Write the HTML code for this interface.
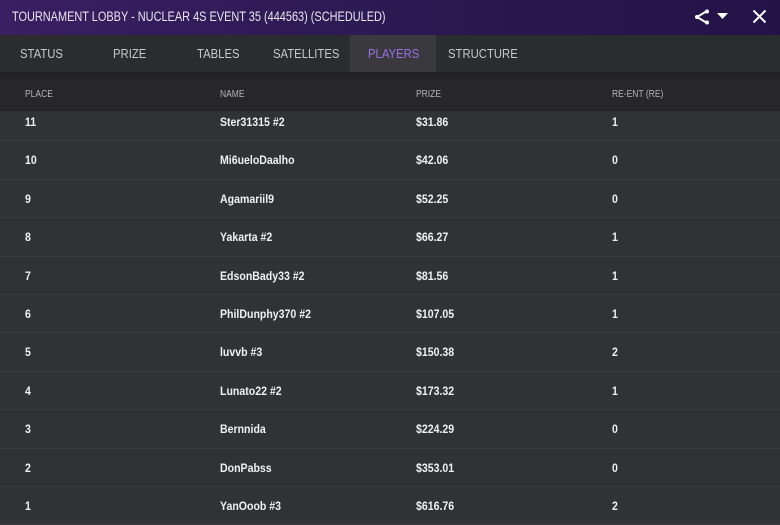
<!DOCTYPE html>
<html><head><style>
*{margin:0;padding:0;box-sizing:border-box}
body{width:780px;height:524px;overflow:hidden;background:#303236;font-family:"Liberation Sans",sans-serif;position:relative}
.n{display:inline-block;transform:scaleX(0.87);transform-origin:0 50%;white-space:nowrap}
.top{position:absolute;left:0;top:0;width:780px;height:35px;background:linear-gradient(90deg,#3a1f63 0%,#2e1a55 40%,#241247 100%);color:#e8e6ee;font-size:13.5px;line-height:34px;padding-left:12px}
.top .n{transform:scaleX(0.81)}
.tabs{position:absolute;left:0;top:35px;width:780px;height:37px;background:#2a2c2e}
.tab{position:absolute;top:0;height:37px;line-height:37px;font-size:13px;color:#c8c8cc}
.gap{position:absolute;left:0;top:72px;width:780px;height:6px;background:#232325}
.hdr{position:absolute;left:0;top:78px;width:780px;height:33px;background:#272729;z-index:2}
.hdr span{position:absolute;top:0;line-height:33px;font-size:10px;color:#b4b4b8;transform:scaleX(0.85);transform-origin:0 50%}
.rows{position:absolute;left:0;top:103px;width:780px}
.row{position:relative;height:38.4px;border-bottom:1px solid #3c3a3e;color:#f0f0f2;font-size:12px;font-weight:bold}
.row span{position:absolute;top:0;line-height:38px;transform:scaleX(0.88);transform-origin:0 50%;white-space:nowrap}
.c1{left:25px}.c2{left:220px}.c3{left:416px}.c4{left:612px}
</style></head><body>
<div class="top"><span class="n">TOURNAMENT LOBBY - NUCLEAR 4S EVENT 35 (444563) (SCHEDULED)</span>
<svg style="position:absolute;left:694px;top:9px" width="16" height="16" viewBox="0 0 16 16"><path d="M13 2L3 8L13 14" stroke="#fff" stroke-width="2" fill="none"/><circle cx="13" cy="2.5" r="2" fill="#fff"/><circle cx="3" cy="8" r="2" fill="#fff"/><circle cx="13" cy="13.5" r="2" fill="#fff"/></svg>
<svg style="position:absolute;left:717px;top:13px" width="11" height="7"><path d="M0 0H11L5.5 6Z" fill="#fff"/></svg>
<svg style="position:absolute;left:752px;top:9px" width="15" height="15"><path d="M1.5 1.5L13.5 13.5M13.5 1.5L1.5 13.5" stroke="#fff" stroke-width="2"/></svg>
</div>
<div class="tabs">
<div class="tab" style="left:20px"><span class="n">STATUS</span></div>
<div class="tab" style="left:113px"><span class="n">PRIZE</span></div>
<div class="tab" style="left:197px"><span class="n">TABLES</span></div>
<div class="tab" style="left:273px"><span class="n">SATELLITES</span></div>
<div class="tab" style="left:350px;width:86px;background:#3a3a3e;color:#9b6fe6;padding-left:18px"><span class="n">PLAYERS</span></div>
<div class="tab" style="left:448px"><span class="n">STRUCTURE</span></div>
</div>
<div class="gap"></div>
<div class="hdr"><span class="c1">PLACE</span><span class="c2">NAME</span><span class="c3">PRIZE</span><span class="c4">RE-ENT (RE)</span></div>
<div class="rows">
<div class="row"><span class="c1">11</span><span class="c2">Ster31315 #2</span><span class="c3">$31.86</span><span class="c4">1</span></div>
<div class="row"><span class="c1">10</span><span class="c2">Mi6ueloDaalho</span><span class="c3">$42.06</span><span class="c4">0</span></div>
<div class="row"><span class="c1">9</span><span class="c2">Agamariil9</span><span class="c3">$52.25</span><span class="c4">0</span></div>
<div class="row"><span class="c1">8</span><span class="c2">Yakarta #2</span><span class="c3">$66.27</span><span class="c4">1</span></div>
<div class="row"><span class="c1">7</span><span class="c2">EdsonBady33 #2</span><span class="c3">$81.56</span><span class="c4">1</span></div>
<div class="row"><span class="c1">6</span><span class="c2">PhilDunphy370 #2</span><span class="c3">$107.05</span><span class="c4">1</span></div>
<div class="row"><span class="c1">5</span><span class="c2">luvvb #3</span><span class="c3">$150.38</span><span class="c4">2</span></div>
<div class="row"><span class="c1">4</span><span class="c2">Lunato22 #2</span><span class="c3">$173.32</span><span class="c4">1</span></div>
<div class="row"><span class="c1">3</span><span class="c2">Bernnida</span><span class="c3">$224.29</span><span class="c4">0</span></div>
<div class="row"><span class="c1">2</span><span class="c2">DonPabss</span><span class="c3">$353.01</span><span class="c4">0</span></div>
<div class="row"><span class="c1">1</span><span class="c2">YanOoob #3</span><span class="c3">$616.76</span><span class="c4">2</span></div>
</div>
</body></html>
